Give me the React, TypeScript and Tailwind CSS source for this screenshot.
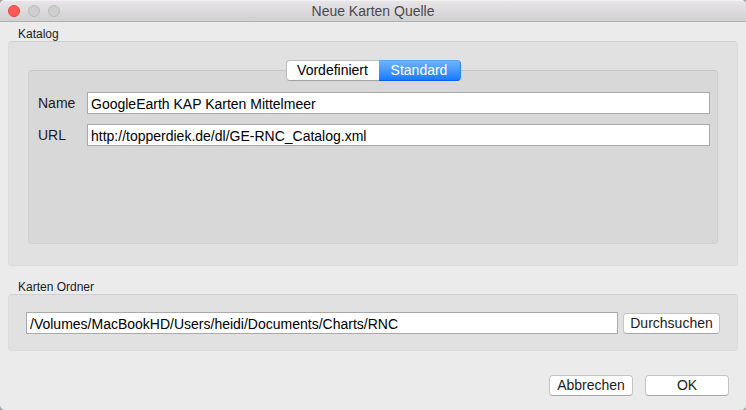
import { useState } from "react";
import type { ReactNode } from "react";

function PushButton({ children, className = "" }: { children: ReactNode; className?: string }) {
  return (
    <button
      type="button"
      className={`h-[21px] rounded-[4px] border border-[#c4c4c4] border-b-[#a8a8a8] bg-white text-center leading-[19px] ${className}`}
    >
      {children}
    </button>
  );
}

function TextField({ id, value, onChange }: { id: string; value: string; onChange: (v: string) => void }) {
  return (
    <input
      id={id}
      type="text"
      value={value}
      onChange={(e) => onChange(e.target.value)}
      className="h-[22px] w-full min-w-0 border border-[#aaaaaa] bg-white px-[3px] pt-[2px] text-black outline-none"
    />
  );
}

function TitleBar() {
  return (
    <header className="grid h-[22px] shrink-0 grid-cols-[1fr_auto_1fr] items-center rounded-t-[5px] border-t border-b border-t-[#f3f2f3] border-b-[#b1b1b1] bg-linear-to-b from-[#e8e4e8] to-[#d1d1d1] px-2">
      <div className="flex gap-2">
        <button type="button" aria-label="Schließen" className="size-3 rounded-full border border-[#e2463f] bg-[#fc5b57]" />
        <button type="button" aria-label="Minimieren" className="size-3 rounded-full border border-[#b9b9b9] bg-[#cfcfcf]" />
        <button type="button" aria-label="Zoomen" className="size-3 rounded-full border border-[#b9b9b9] bg-[#cfcfcf]" />
      </div>
      <h1 className="leading-4 text-[#4b494b]">Neue Karten Quelle</h1>
    </header>
  );
}

export default function App() {
  const [tab, setTab] = useState("standard");
  const [name, setName] = useState("GoogleEarth KAP Karten Mittelmeer");
  const [url, setUrl] = useState("http://topperdiek.de/dl/GE-RNC_Catalog.xml");
  const [folder, setFolder] = useState("/Volumes/MacBookHD/Users/heidi/Documents/Charts/RNC");

  const selected = "border-[#2f83f0] border-t-[#5aa5f5] border-b-[#0c62e6] bg-linear-to-b from-[#6db3fa] to-[#0f7bff] text-white";
  const plain = "border-[#bdbdbd] border-b-[#a3a3a3] bg-white text-black";

  return (
    <div className="bg-[#9ba3a4] font-['Liberation_Sans',Arial,sans-serif] text-[14px] text-[#1c1c1c]">
      <div className="flex min-h-screen flex-col rounded-[5px] bg-[#ebebeb]">
        <TitleBar />
        <main className="flex grow flex-col px-2 pt-[5px] pb-[14px]">
          <section aria-labelledby="katalog">
            <h2 id="katalog" className="h-[14px] pl-[10px] text-[12px] leading-[15px]">Katalog</h2>
            <div className="rounded-[4px] border border-[#dbdbdb] border-t-[#cfcfcf] bg-[#e1e1e1] px-[19px] pt-[18px] pb-[21px]">
              <div role="tablist" className="relative flex justify-center">
                <button
                  type="button"
                  role="tab"
                  aria-selected={tab === "vordefiniert"}
                  onClick={() => setTab("vordefiniert")}
                  className={`h-[21px] w-[93px] rounded-l-[4px] border border-r-0 leading-[19px] ${tab === "vordefiniert" ? selected : plain}`}
                >
                  Vordefiniert
                </button>
                <button
                  type="button"
                  role="tab"
                  aria-selected={tab === "standard"}
                  onClick={() => setTab("standard")}
                  className={`h-[21px] w-[82px] rounded-r-[4px] border border-l-0 leading-[19px] ${tab === "standard" ? selected : plain}`}
                >
                  Standard
                </button>
              </div>
              <div
                role="tabpanel"
                className="-mt-[11px] grid min-h-[174px] grid-cols-[49px_1fr] content-start items-center gap-y-[10px] rounded-[4px] border border-[#d0d0d0] border-t-[#c5c5c5] bg-[#d8d8d8] pt-[21px] pr-[7px] pl-[9px]"
              >
                <label htmlFor="name">Name</label>
                <TextField id="name" value={name} onChange={setName} />
                <label htmlFor="url">URL</label>
                <TextField id="url" value={url} onChange={setUrl} />
              </div>
            </div>
          </section>
          <section aria-labelledby="ordner" className="pt-[14px]">
            <h2 id="ordner" className="h-[14px] pl-[10px] text-[12px] leading-[15px]">
              <label htmlFor="folder">Karten Ordner</label>
            </h2>
            <div className="flex items-end gap-[5px] rounded-[4px] border border-[#dbdbdb] border-t-[#cfcfcf] bg-[#e1e1e1] px-[17px] pt-[17px] pb-[16px]">
              <TextField id="folder" value={folder} onChange={setFolder} />
              <PushButton className="w-[97px] shrink-0">Durchsuchen</PushButton>
            </div>
          </section>
          <div className="mt-auto flex justify-end gap-3 pr-[9px]">
            <PushButton className="w-[84px]">Abbrechen</PushButton>
            <PushButton className="w-[84px]">OK</PushButton>
          </div>
        </main>
      </div>
    </div>
  );
}
